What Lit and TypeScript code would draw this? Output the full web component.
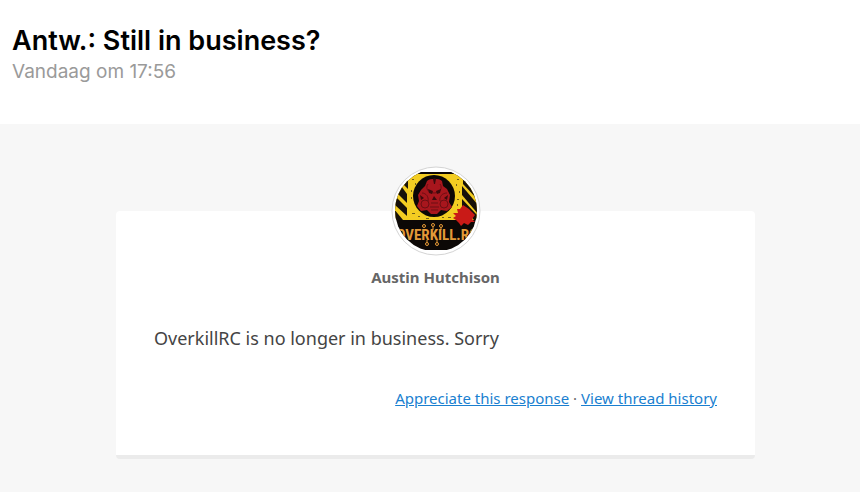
import { LitElement, html, css } from "lit";
import { customElement } from "lit/decorators.js";

@customElement("sender-avatar")
class SenderAvatar extends LitElement {
  static styles = css`
    :host {
      display: block;
    }
    .logo {
      display: block;
    }
    .ring {
      fill: #ffffff;
      stroke: #d4d4d4;
    }
    .brand {
      font: bold 15px "Liberation Sans Narrow", "Roboto Condensed", "Liberation Sans", sans-serif;
      fill: #e39a38;
      text-anchor: middle;
    }
  `;

  render() {
    return html`
      <svg class="logo" width="90" height="90" viewBox="0 0 90 90" role="img" aria-label="Overkill.RC logo">
        <defs>
          <clipPath id="disc"><circle cx="45" cy="44.5" r="41" /></clipPath>
        </defs>
        <circle class="ring" cx="45" cy="45" r="44" />
        <g clip-path="url(#disc)">
          <rect x="3" y="6" width="84" height="78" fill="#0c0806" />
          <path d="M3 8H23L24 7H63L64 8H87V54H3Z" fill="#f3cd22" />
          <path d="M23 6H63V8H23Z" fill="#0c0806" />
          <g fill="#17110a">
            <path d="M3 18L8 17L16 28V37L3 24Z" />
            <path d="M10 12L13 9L17 14V23L10 16Z" />
            <path d="M3 29L16 42V50L3 38Z" />
            <path d="M3 43L12 54H3Z" />
            <path d="M71 20L88 40V49L71 29Z" />
            <path d="M72 9L88 26V35L72 18Z" />
            <path d="M71 33L87 50V54H83L71 41Z" />
          </g>
          <circle cx="43" cy="30" r="21" fill="#0c0806" />
          <g fill="#a8161d">
            <path d="M36 15C39 12 48 12 51 15L52 20L56 23L59 29L58 36L61 41L56 45L50 44L46 48H40L36 44L30 45L26 40L28 35L27 29L30 24L34 20Z" />
          </g>
          <g fill="none" stroke="#6d0f14">
            <path d="M37 18C34 22 37 27 43 27C49 27 52 22 49 18" />
            <path d="M31 27C35 27 38 31 37 35M56 27C51 27 48 31 49 35" />
            <circle cx="34" cy="38" r="4" />
            <circle cx="53" cy="38" r="4" />
            <path d="M40 37H47M39 41H48M40 44H47" />
          </g>
          <g fill="#3d0a0d">
            <path d="M37 23L42 25L41 28L38 27Z" />
            <path d="M50 23L45 25L46 28L49 27Z" />
            <path d="M43 30L46 34H41Z" />
            <path d="M29 29L33 32L30 34Z" />
            <path d="M57 29L53 32L56 34Z" />
            <path d="M42 13H45L44 18H43Z" />
          </g>
          <g fill="#73601b">
            <path d="M21 13H23V14H21ZM24 17H25V19H24ZM20 31H21V33H20ZM21 47H24V48H21ZM27 50H29V51H27ZM57 51H60V52H57ZM66 13H68V14H66ZM65 18H66V20H65ZM68 25H69V27H68ZM66 33H68V34H66ZM51 51H53V52H51ZM35 52H38V53H35ZM66 38H67V40H66ZM20 24H21V26H20Z" />
          </g>
          <path d="M66 43L69 43L72 39L75 41L78 43L81 46L84 49L81 53L84 56L80 56L77 59L73 57L70 60L68 57L65 54L62 52L65 50L62 47L67 47Z" fill="#c91a17" />
          <text class="brand" x="46" y="74">OVERKILL.RC</text>
          <g fill="#160c06" stroke="#e39a38">
            <path d="M42 60V64M50 60V64M36 74V78M46 74V78" />
            <circle cx="33" cy="60" r="1.500" />
            <circle cx="42" cy="59" r="1.500" />
            <circle cx="50" cy="60" r="1.500" />
            <circle cx="36" cy="78" r="1.500" />
            <circle cx="46" cy="78" r="1.500" />
          </g>
        </g>
      </svg>
    `;
  }
}

@customElement("app-root")
class AppRoot extends LitElement {
  static styles = css`
    :host {
      display: flex;
      flex-direction: column;
      min-height: 100vh;
      background: #ffffff;
    }
    .header {
      box-sizing: border-box;
      padding: 24px 12px 38px;
      font-family: Inter, "Liberation Sans", sans-serif;
    }
    .subject {
      margin: 0;
      font-size: 27px;
      line-height: 34px;
      font-weight: 600;
      color: #000000;
    }
    .date {
      display: block;
      font-size: 19px;
      line-height: 28px;
      color: #9a9a9a;
    }
    .thread {
      flex: 1;
      padding: 42px 105px 32px 116px;
      background: #f7f7f7;
      font-family: "Noto Sans", sans-serif;
    }
    .message {
      display: flex;
      flex-direction: column;
      margin-top: 45px;
      padding: 0 38px 45px;
      background: #ffffff;
      border-bottom: 4px solid #ebebeb;
      border-radius: 4px;
    }
    .avatar {
      align-self: center;
      margin-top: -45px;
    }
    .sender {
      margin: 10px 0 0;
      text-align: center;
      font-size: 15px;
      line-height: 22px;
      font-weight: 700;
      color: #666666;
    }
    .body {
      margin: 37px 0 0;
      font-size: 18px;
      line-height: 26px;
      color: #444444;
    }
    .actions {
      margin-top: 35px;
      text-align: right;
      font-size: 15px;
      line-height: 24px;
      color: #666666;
    }
    .link {
      color: #1a7fd0;
      text-decoration: underline;
    }
  `;

  render() {
    return html`
      <header class="header">
        <h1 class="subject">Antw.: Still in business?</h1>
        <time class="date">Vandaag om 17:56</time>
      </header>
      <main class="thread">
        <article class="message">
          <sender-avatar class="avatar"></sender-avatar>
          <h2 class="sender">Austin Hutchison</h2>
          <p class="body">OverkillRC is no longer in business. Sorry</p>
          <nav class="actions">
            <a class="link" href="#appreciate">Appreciate this response</a> ·
            <a class="link" href="#history">View thread history</a>
          </nav>
        </article>
      </main>
    `;
  }
}
